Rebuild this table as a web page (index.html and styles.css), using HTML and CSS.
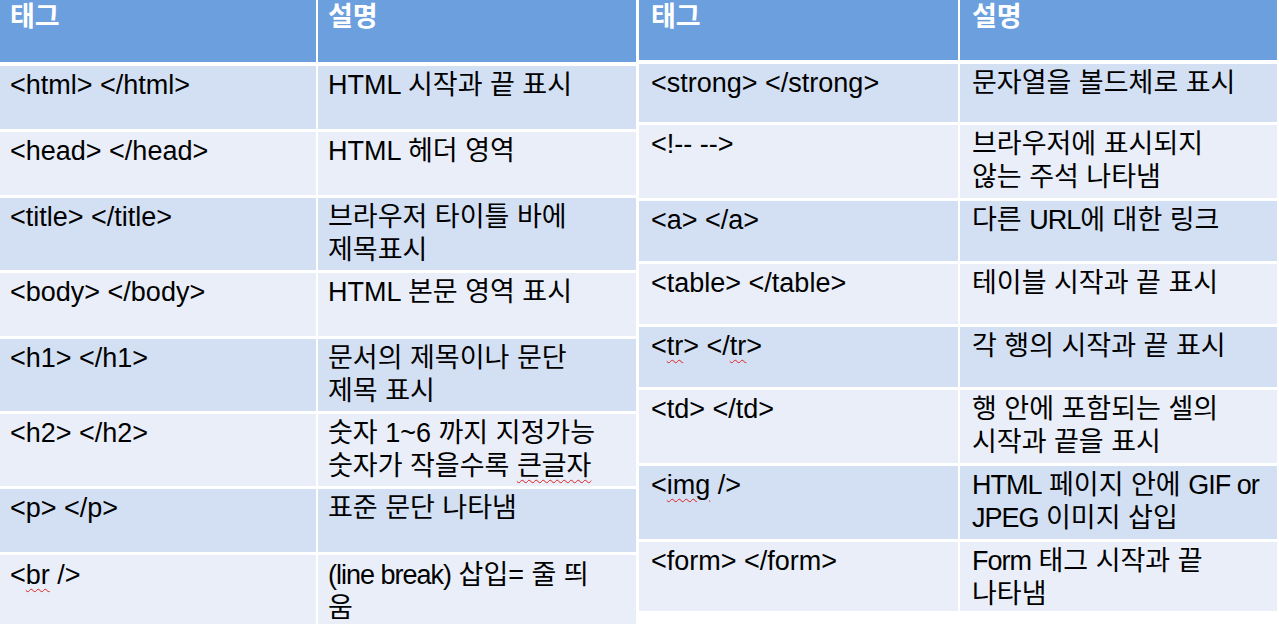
FILE: index.html
```html
<!DOCTYPE html>
<html lang="ko">
<head>
<meta charset="utf-8">
<title>HTML 태그</title>
<link rel="stylesheet" href="styles.css">
</head>
<body>
<div class="page">
  <table class="tags left">
    <thead>
      <tr class="head"><th class="c1">태그</th><th class="c2">설명</th></tr>
    </thead>
    <tbody>
      <tr class="odd one"><td class="c1">&lt;html&gt; &lt;/html&gt;</td><td class="c2">HTML 시작과 끝 표시</td></tr>
      <tr class="even one"><td class="c1">&lt;head&gt; &lt;/head&gt;</td><td class="c2">HTML 헤더 영역</td></tr>
      <tr class="odd two"><td class="c1">&lt;title&gt; &lt;/title&gt;</td><td class="c2">브라우저 타이틀 바에<br>제목표시</td></tr>
      <tr class="even one"><td class="c1">&lt;body&gt; &lt;/body&gt;</td><td class="c2">HTML 본문 영역 표시</td></tr>
      <tr class="odd two"><td class="c1">&lt;h1&gt; &lt;/h1&gt;</td><td class="c2">문서의 제목이나 문단<br>제목 표시</td></tr>
      <tr class="even two"><td class="c1">&lt;h2&gt; &lt;/h2&gt;</td><td class="c2">숫자 1~6 까지 지정가능<br>숫자가 작을수록 <span class="spell">큰글자</span></td></tr>
      <tr class="odd one"><td class="c1">&lt;p&gt; &lt;/p&gt;</td><td class="c2">표준 문단 나타냄</td></tr>
      <tr class="even two"><td class="c1">&lt;<span class="spell">br</span> /&gt;</td><td class="c2"><span class="lat">(line break)</span> 삽입= 줄 띄<br>움</td></tr>
    </tbody>
  </table>
  <table class="tags right">
    <thead>
      <tr class="head"><th class="c1">태그</th><th class="c2">설명</th></tr>
    </thead>
    <tbody>
      <tr class="odd first"><td class="c1">&lt;strong&gt; &lt;/strong&gt;</td><td class="c2">문자열을 볼드체로 표시</td></tr>
      <tr class="even two"><td class="c1">&lt;!-- --&gt;</td><td class="c2">브라우저에 표시되지<br>않는 주석 나타냄</td></tr>
      <tr class="odd one"><td class="c1">&lt;a&gt; &lt;/a&gt;</td><td class="c2">다른 <span class="lat">URL</span>에 대한 링크</td></tr>
      <tr class="even one"><td class="c1">&lt;table&gt; &lt;/table&gt;</td><td class="c2">테이블 시작과 끝 표시</td></tr>
      <tr class="odd one"><td class="c1">&lt;<span class="spell">tr</span>&gt; &lt;/<span class="spell">tr</span>&gt;</td><td class="c2">각 행의 시작과 끝 표시</td></tr>
      <tr class="even two"><td class="c1">&lt;td&gt; &lt;/td&gt;</td><td class="c2">행 안에 포함되는 셀의<br>시작과 끝을 표시</td></tr>
      <tr class="odd two"><td class="c1">&lt;<span class="spell">img</span> /&gt;</td><td class="c2"><span class="lat">HTML</span> 페이지 안에 <span class="lat">GIF or</span><br><span class="lat">JPEG</span> 이미지 삽입</td></tr>
      <tr class="even last"><td class="c1">&lt;form&gt; &lt;/form&gt;</td><td class="c2"><span class="lat">Form</span> 태그 시작과 끝<br>나타냄</td></tr>
    </tbody>
  </table>
</div>
</body>
</html>
```
FILE: styles.css
```css
html, body {
  margin: 0;
  padding: 0;
  background: #ffffff;
}

.page {
  display: flex;
  gap: 3px;
  align-items: flex-start;
  width: 1279px;
  height: 624px;
  overflow: hidden;
}

.tags {
  border-collapse: collapse;
  table-layout: fixed;
  font-family: "Liberation Sans", "Noto Sans CJK KR", sans-serif;
  font-size: 27px;
  line-height: 33px;
  color: #000000;
}

.tags.left { width: 636px; }
.tags.right { width: 638px; }

.tags th,
.tags td {
  padding: 3px 10px 0 10px;
  vertical-align: top;
  text-align: left;
  white-space: nowrap;
  border-bottom: 3px solid #ffffff;
}

.tags .c1 {
  width: 317px;
  border-right: 2px solid #ffffff;
  box-sizing: border-box;
}

.tags.right th,
.tags.right td {
  padding-left: 12px;
  padding-right: 12px;
}

.tags.right .c1 { width: 320px; }

.head th {
  background: #6b9fdd;
  color: #ffffff;
  font-weight: bold;
  border-bottom: 4px solid #ffffff;
  padding-top: 1px;
}

.left .head { height: 64px; }
.right .head { height: 62px; }

.odd td { background: #d3dff2; }
.even td { background: #e9eef8; }

.left .one { height: 66px; }
.left .two { height: 75px; }
.left .two:last-child td { padding-top: 4px; }
.right .first { height: 61px; }
.right .one { height: 63px; }
.right .two { height: 76px; }
.right .last { height: 64px; }
.right .last td { border-bottom: 0; }

.lat {
  letter-spacing: -1px;
}

.spell {
  text-decoration: underline wavy #e02020;
  text-decoration-thickness: 1px;
  text-underline-offset: 4px;
}
```
